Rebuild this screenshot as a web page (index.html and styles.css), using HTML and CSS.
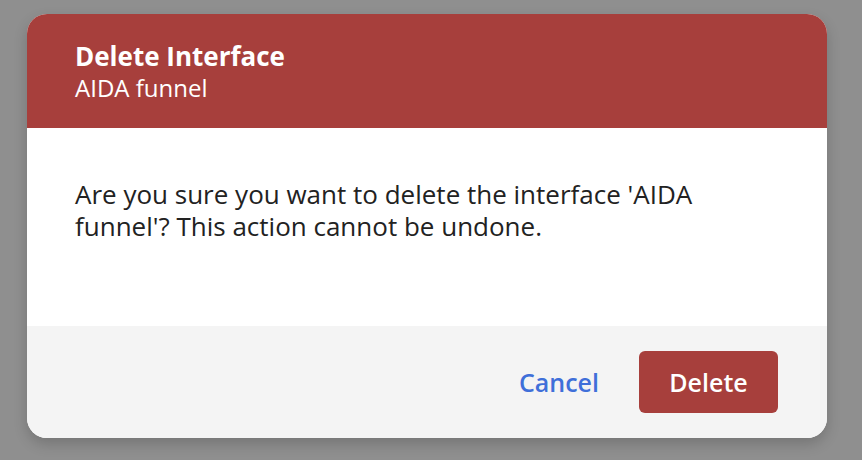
FILE: index.html
```html
<!DOCTYPE html>
<html lang="en">
  <head>
    <meta charset="UTF-8" />
    <title>Delete Interface</title>
    <link rel="stylesheet" href="styles.css">
  </head>

  <body>
    <div class="overlay">
      <!-- confirm dialog -->
      <div class="dialog">
        <div class="dialog-header">
          <h2 class="dialog-title">Delete Interface</h2>
          <p class="dialog-subtitle">AIDA funnel</p>
        </div>

        <div class="dialog-body">
          <p>Are you sure you want to delete the interface 'AIDA funnel'? This action cannot be undone.</p>
        </div>

        <div class="dialog-footer">
          <button class="btn btn-cancel">Cancel</button>
          <button class="btn btn-delete">Delete</button>
        </div>
      </div>
    </div>
  </body>
</html>
```

FILE: styles.css
```css
* {
  margin: 0;
  padding: 0;
  box-sizing: border-box;
}

body {
  background-color: #8f8f8f;
  font-family: "Open Sans", "Noto Sans", sans-serif;
}

.overlay {
  padding: 14px 35px 22px 27px;
}

.dialog {
  width: 800px;
  border-radius: 20px;
  overflow: hidden;
  background-color: #fff;
  box-shadow: 0 6px 14px rgba(0, 0, 0, 0.18);
}

/* red title bar */
.dialog-header {
  height: 114px;
  padding: 26px 48px 0;
  background-color: #a73f3c;
  color: #fff;
}

.dialog-title {
  font-size: 26px;
  font-weight: 700;
  line-height: 32px;
}

.dialog-subtitle {
  font-size: 24px;
  line-height: 32px;
}

.dialog-body {
  height: 198px;
  padding: 50px 48px 0;
  color: #222;
  font-size: 26px;
  line-height: 32px;
}

.dialog-footer {
  display: flex;
  justify-content: flex-end;
  align-items: center;
  gap: 20px;
  height: 112px;
  padding: 0 49px;
  background-color: #f4f4f4;
}

.btn {
  height: 62px;
  border: none;
  border-radius: 6px;
  font-family: inherit;
  font-size: 25px;
  font-weight: 600;
  cursor: pointer;
}

.btn-cancel {
  padding: 0 20px;
  background: none;
  color: #3f6fd9;
}

.btn-delete {
  width: 139px;
  background-color: #a73f3c;
  color: #fff;
}
```
